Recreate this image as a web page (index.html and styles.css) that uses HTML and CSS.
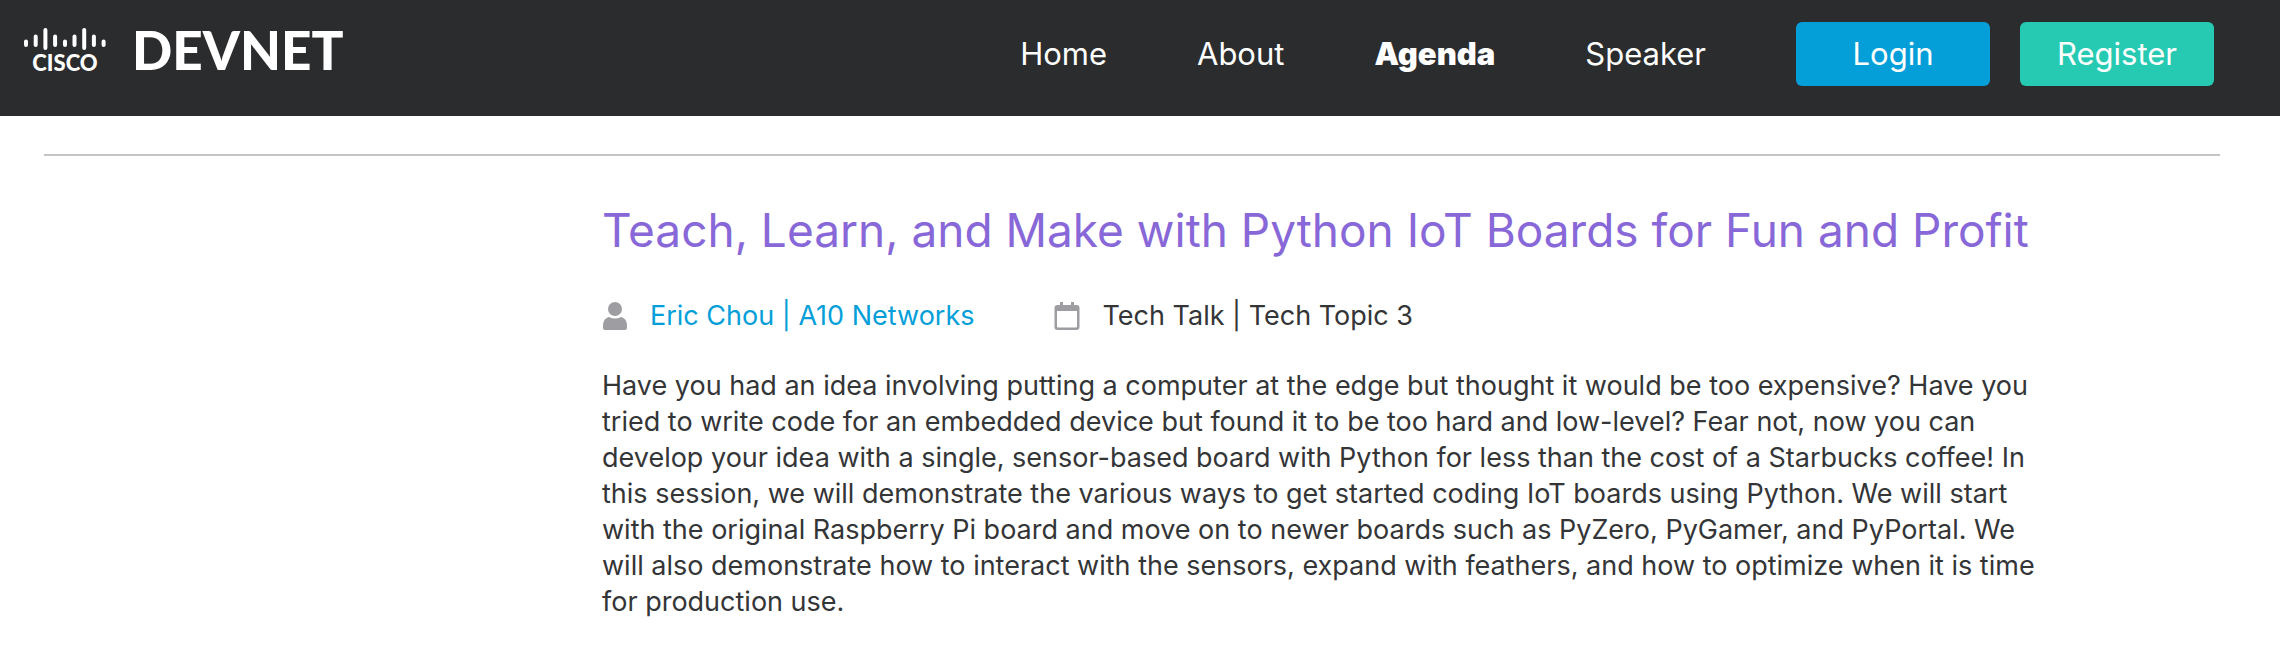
FILE: index.html
```html
<!DOCTYPE html>
<html lang="en">
<head>
<meta charset="utf-8">
<meta name="viewport" content="width=device-width, initial-scale=1">
<title>Cisco DevNet - Agenda</title>
<link rel="stylesheet" href="styles.css">
</head>
<body>
<header class="header">
  <a class="brand" href="#">
    <span class="cisco">
      <svg class="cisco-bars" viewBox="0 0 82 22" aria-hidden="true">
        <g stroke="currentColor" stroke-width="4" stroke-linecap="round">
          <path d="M2 13.5V17M11.7 8.500V17M21.400 2V20M31.100 8.500V17M41 13.500V17M50.500 8.500V17M60.200 2V20M69.900 8.500V17M79.600 13.500V17"/>
        </g>
      </svg>
      <span class="cisco-name">CISCO</span>
    </span>
    <span class="devnet">DEVNET</span>
  </a>
  <nav class="nav">
    <a class="nav-link" href="#">Home</a>
    <a class="nav-link" href="#">About</a>
    <a class="nav-link active" href="#" aria-current="page">Agenda</a>
    <a class="nav-link" href="#">Speaker</a>
    <div class="actions">
      <button class="btn login" type="button">Login</button>
      <button class="btn register" type="button">Register</button>
    </div>
  </nav>
</header>
<main class="main">
  <article class="session">
    <h1 class="title">Teach, Learn, and Make with Python IoT Boards for Fun and Profit</h1>
    <div class="meta">
      <div class="meta-item">
        <svg class="icon" viewBox="0 0 26 30" aria-hidden="true">
          <circle cx="13" cy="8" r="7"/>
          <path d="M7 16C3 17 1 20 1 25V27Q1 29 3 29H23Q25 29 25 27V25C25 20 23 17 19 16Q13 19 7 16Z"/>
        </svg>
        <a class="speaker" href="#">Eric Chou | A10 Networks</a>
      </div>
      <div class="meta-item">
        <svg class="icon" viewBox="0 0 26 30" aria-hidden="true">
          <path fill-rule="evenodd" d="M6 1H9V4H17V1H20V4H22.500Q25.500 4 25.500 7V26Q25.500 29 22.500 29H3.500Q.5 29 .5 26V7Q.5 4 3.500 4H6ZM3 10V25.500Q3 26.500 4 26.500H22Q23 26.500 23 25.500V10Z"/>
        </svg>
        <span>Tech Talk | Tech Topic 3</span>
      </div>
    </div>
    <p class="description">Have you had an idea involving putting a computer at the edge but thought it would be too expensive? Have you tried to write code for an embedded device but found it to be too hard and low-level? Fear not, now you can develop your idea with a single, sensor-based board with Python for less than the cost of a Starbucks coffee! In this session, we will demonstrate the various ways to get started coding IoT boards using Python. We will start with the original Raspberry Pi board and move on to newer boards such as PyZero, PyGamer, and PyPortal. We will also demonstrate how to interact with the sensors, expand with feathers, and how to optimize when it is time for production use.</p>
  </article>
</main>
</body>
</html>
```
FILE: styles.css
```css
* { box-sizing: border-box; }
body {
  margin: 0;
  background: #fff;
  color: #343537;
  font-family: Inter, "Liberation Sans", sans-serif;
  font-size: 27px;
  font-weight: 400;
  line-height: 36px;
}
a { color: inherit; text-decoration: none; }
.header {
  display: flex;
  justify-content: space-between;
  align-items: flex-start;
  padding: 22px 66px 30px 24px;
  background: #2b2c2e;
  color: #fff;
}
.brand {
  display: flex;
  gap: 26px;
  padding-top: 6px;
  font-family: Lato, sans-serif;
}
.cisco { display: flex; flex-direction: column; align-items: center; gap: 2px; }
.cisco-bars { display: block; width: 82px; height: 22px; }
.cisco-name { font-size: 22px; font-weight: 900; line-height: 22px; }
.devnet { font-size: 53px; font-weight: 900; line-height: 44px; }
.nav { display: flex; align-items: center; gap: 90px; font-size: 31px; }
.active { font-weight: 900; }
.actions { display: flex; gap: 30px; }
.btn {
  width: 194px;
  height: 64px;
  padding: 0;
  border: 0;
  border-radius: 6px;
  color: #fff;
  font: inherit;
}
.login { background: #049fd9; }
.register { background: #26cab3; }
.main {
  margin: 38px 60px 0 44px;
  border-top: 2px solid #c4c4c4;
}
.session { padding: 42px 8% 44px calc(25% + 14px); }
.title {
  margin: 0 0 36px;
  color: #8868d8;
  font-size: 46px;
  font-weight: 400;
  line-height: 64px;
}
.meta { display: flex; gap: 80px; margin-bottom: 34px; }
.meta-item { display: flex; align-items: center; gap: 22px; }
.icon { width: 26px; height: 30px; fill: #9e9ea2; }
.speaker { color: #049fd9; }
.description { margin: 0; }
```
